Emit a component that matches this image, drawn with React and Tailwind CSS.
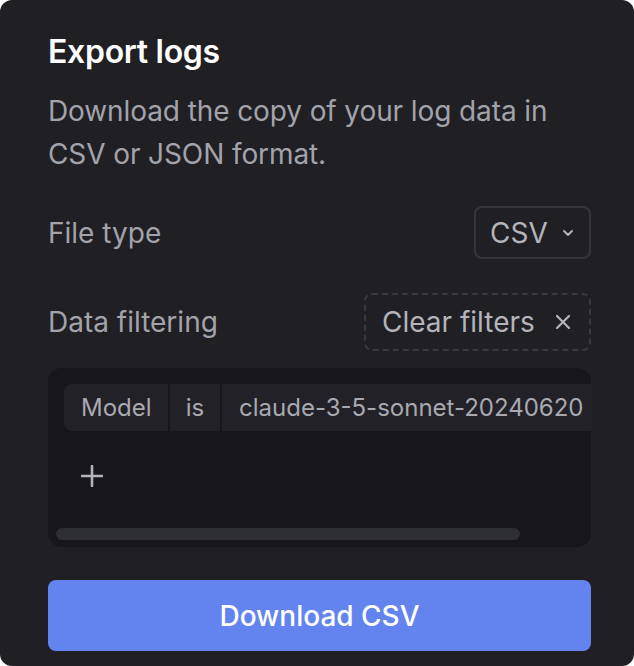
import React from "react";

export default function App() {
  return (
    <div className="w-[634px] h-[666px] bg-white" style={{ fontFamily: "Inter, 'Noto Sans', sans-serif" }}>
      <div className="w-[634px] h-[666px] bg-[#1f1f24] rounded-[12px] pl-[48px] pr-[43px] pt-[30px] flex flex-col">
        <h1 className="text-[32px] leading-[44px] font-semibold text-white tracking-[-0.3px]">Export logs</h1>
        <p className="mt-[16px] text-[28px] leading-[43px] text-[#a3a3ab] tracking-[-0.1px]">
          Download the copy of your log data in CSV or JSON format.
        </p>
        <div className="mt-[30px] flex items-center justify-between h-[53px]">
          <span className="text-[28px] text-[#a3a3ab]">File type</span>
          <div className="w-[117px] h-[53px] border-2 border-[#34343a] rounded-[8px] pl-[14px] flex items-center gap-[14px] text-[28px] text-[#b4b4bb]">
            <span>CSV</span>
            <svg width="12" height="8" viewBox="0 0 12 8" fill="none" stroke="#b4b4bb" strokeWidth="2" strokeLinecap="round" strokeLinejoin="round">
              <path d="M2 2l4 4 4-4" />
            </svg>
          </div>
        </div>
        <div className="mt-[34px] flex items-center justify-between h-[58px]">
          <span className="text-[28px] text-[#a3a3ab]">Data filtering</span>
          <div className="w-[227px] h-[58px] border-2 border-dashed border-[#38383e] rounded-[8px] pl-[16px] flex items-center gap-[20px] text-[28px] text-[#b4b4bb]">
            <span>Clear filters</span>
            <svg width="16" height="16" viewBox="0 0 16 16" fill="none" stroke="#b4b4bb" strokeWidth="2.2" strokeLinecap="round">
              <path d="M2 2l12 12M14 2L2 14" />
            </svg>
          </div>
        </div>
        <div className="mt-[17px] h-[179px] bg-[#17161c] rounded-[14px] overflow-hidden flex flex-col pt-[16px] pl-[16px]">
          <div className="flex gap-[2px] h-[47px] text-[24px] text-[#a9a9b0] whitespace-nowrap">
            <div className="w-[104px] bg-[#222127] rounded-l-[8px] pl-[17px] flex items-center shrink-0">Model</div>
            <div className="w-[50px] bg-[#222127] flex items-center justify-center shrink-0">is</div>
            <div className="bg-[#222127] pl-[17px] pr-[20px] flex items-center shrink-0">claude-3-5-sonnet-20240620</div>
          </div>
          <div className="h-[90px] flex items-center pl-[17px]">
            <svg width="22" height="22" viewBox="0 0 22 22" fill="none" stroke="#b4b4bb" strokeWidth="2.6" strokeLinecap="round">
              <path d="M11 1v20M1 11h20" />
            </svg>
          </div>
          <div className="mt-[7px] ml-[-8px] w-[464px] h-[12px] rounded-full bg-[#2e2e35]" />
        </div>
        <button className="mt-[33px] h-[71px] rounded-[8px] bg-[#6384ef] text-white text-[28px] font-medium">
          Download CSV
        </button>
      </div>
    </div>
  );
}
